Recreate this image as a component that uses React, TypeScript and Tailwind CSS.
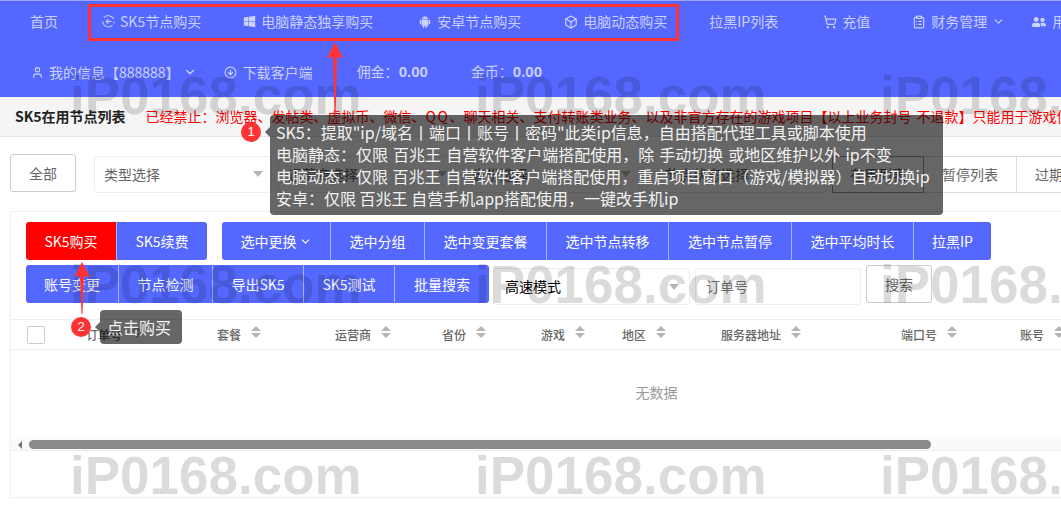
import { ChevronDown, CircleArrowDown, Box, ShoppingCart, User, ClipboardList } from "lucide-react"
import { AiFillAndroid } from "react-icons/ai"
import { FaWindows, FaUserFriends } from "react-icons/fa"

const font = "font-['Noto_Sans_CJK_SC','Liberation_Sans',sans-serif]"

function Sk5Icon() {
  return (
    <svg width="13" height="13" viewBox="0 0 14 14" fill="none" stroke="currentColor" strokeWidth="1.1">
      <path d="M12.5 4.5A6 6 0 0 0 2 3.2M1 7a6 6 0 0 0 10.4 4" />
      <path d="M13 7a6 6 0 0 1-.4 2" />
      <path d="M4.5 7H10M7 4.5 4.5 7 7 9.5" />
    </svg>
  )
}

function SortIcon() {
  return (
    <span className="flex flex-col gap-[2px] ml-[10px] -mt-[5px]">
      <span className="w-0 h-0 border-x-[5px] border-x-transparent border-b-[5px] border-b-[#b5b5b5]" />
      <span className="w-0 h-0 border-x-[5px] border-x-transparent border-t-[5px] border-t-[#b5b5b5]" />
    </span>
  )
}

function Caret() {
  return <span className="w-0 h-0 border-x-[5px] border-x-transparent border-t-[6px] border-t-[#b5b5b5]" />
}

const headers = [
  { label: "订单号", w: "w-[131px]" },
  { label: "套餐", w: "w-[118px]" },
  { label: "运营商", w: "w-[107px]" },
  { label: "省份", w: "w-[99px]" },
  { label: "游戏", w: "w-[81px]" },
  { label: "地区", w: "w-[99px]" },
  { label: "服务器地址", w: "w-[180px]" },
  { label: "端口号", w: "w-[119px]" },
  { label: "账号", w: "w-[60px]" },
]

function Watermark() {
  const rows = ["top-[66px]", "top-[255px]", "top-[446px]"]
  const cols = ["left-[70px]", "left-[475px]", "left-[880px]"]
  return (
    <>
      {rows.map((r) =>
        cols.map((c) => (
          <span
            key={r + c}
            className={`absolute ${r} ${c} font-['Liberation_Sans'] font-bold text-[53px] leading-[60px] text-black/[0.14] whitespace-nowrap pointer-events-none`}
          >
            iP0168.com
          </span>
        ))
      )}
    </>
  )
}

export default function App() {
  const navTop = "flex items-center gap-[5px] shrink-0"
  const select = "shrink-0 h-[37px] border border-[#eee] rounded-[3px] flex items-center justify-between pl-[9px] pr-[8px]"
  return (
    <div className={`relative w-[1061px] h-[513px] overflow-hidden bg-white text-[14px] ${font}`}>
      <header className="h-[97px] bg-[#5468ff] border-t border-[#9aa6ff] text-white/70">
        <div className="h-[41px] flex items-center pl-[30px] gap-[44px] whitespace-nowrap">
          <span>首页</span>
          <span className={navTop}><Sk5Icon />SK5节点购买</span>
          <span className={`${navTop} -ml-[2px]`}><FaWindows size={13} />电脑静态独享购买</span>
          <span className={`${navTop} ml-[1px]`}><AiFillAndroid size={14} />安卓节点购买</span>
          <span className={`${navTop} -ml-[1px]`}><Box size={14} />电脑动态购买</span>
          <span className="-ml-[2px]">拉黑IP列表</span>
          <span className={`${navTop} ml-[1px]`}><ShoppingCart size={14} />充值</span>
          <span className={`${navTop} -ml-[2px]`}><ClipboardList size={14} />财务管理<ChevronDown size={13} /></span>
          <span className={`${navTop} -ml-[17px] gap-[6px]`}><FaUserFriends size={14} />用户管理</span>
        </div>
        <div className="h-[55px] pt-[5px] flex items-center pl-[31px] whitespace-nowrap">
          <span className={navTop}><User size={13} />我的信息【888888】<ChevronDown size={14} className="-ml-[2px]" /></span>
          <span className={`${navTop} ml-[27px] gap-[6px]`}><CircleArrowDown size={13} />下载客户端</span>
          <span className="ml-[44px]">佣金：<b className="font-['Liberation_Sans'] text-[15px] font-bold">0.00</b></span>
          <span className="ml-[43px]">金币：<b className="font-['Liberation_Sans'] text-[15px] font-bold">0.00</b></span>
        </div>
      </header>

      <div className="h-[40px] bg-[#f5f5f5] border-b border-[#e5e5e5] flex items-center pl-[15px] whitespace-nowrap">
        <b className="text-[14px] font-bold text-[#222]">SK5在用节点列表</b>
        <span className="ml-[20px] text-[#f00] [word-spacing:2px]">已经禁止：浏览器、发帖类、虚拟币、微信、<span className="tracking-[1.5px]">QQ</span>、聊天相关、支付转账类业务、以及非官方存在的游戏项目【以上业务封号 不退款】只能用于游戏使用</span>
      </div>

      <div className="h-[74px] flex items-center pl-[10px] text-[#666] whitespace-nowrap">
        <button className="shrink-0 w-[66px] h-[38px] border border-[#ccc] rounded-[3px] -mt-[2px]">全部</button>
        <div className={`${select} ml-[18px] w-[178px]`}>类型选择<Caret /></div>
        <div className={`${select} ml-[6px] w-[178px]`}>运营商选择<Caret /></div>
        <div className={`${select} ml-[6px] w-[178px]`}>省份选择<Caret /></div>
        <div className={`${select} ml-[2px] w-[185px] pl-[22px]`}>节点状态选择</div>
        <div className="ml-[5px] flex h-[37px] shrink-0">
          <span className="w-[92px] border border-[#999] flex items-center justify-center">在用列表</span>
          <span className="w-[93px] border border-l-0 border-[#ddd] flex items-center justify-center">暂停列表</span>
          <span className="w-[93px] border border-l-0 border-[#ddd] flex items-center justify-center">过期列表</span>
        </div>
      </div>

      <section className="ml-[10px] h-[287px] border border-r-0 border-[#eee]">
        <div className="pl-[15px] pt-[10px] flex text-white">
          <div className="flex h-[38px]">
            <span className="w-[90px] bg-[#f00] rounded-l-[3px] flex items-center justify-center">SK5购买</span>
            <span className="w-[91px] bg-[#5468ff] border-l border-white/50 rounded-r-[3px] flex items-center justify-center">SK5续费</span>
          </div>
          <div className="ml-[15px] flex h-[38px] bg-[#5468ff] rounded-[3px] divide-x divide-white/50">
            <span className="w-[109px] flex items-center justify-center gap-[2px]">选中更换<ChevronDown size={13} /></span>
            <span className="w-[94px] flex items-center justify-center">选中分组</span>
            <span className="w-[122px] flex items-center justify-center">选中变更套餐</span>
            <span className="w-[122px] flex items-center justify-center">选中节点转移</span>
            <span className="w-[123px] flex items-center justify-center">选中节点暂停</span>
            <span className="w-[122px] flex items-center justify-center">选中平均时长</span>
            <span className="w-[77px] flex items-center justify-center">拉黑IP</span>
          </div>
        </div>

        <div className="pl-[15px] mt-[5px] flex items-start">
          <div className="flex h-[38px] bg-[#5468ff] rounded-[3px] text-white divide-x divide-white/50">
            <span className="w-[93px] flex items-center justify-center">账号变更</span>
            <span className="w-[94px] flex items-center justify-center">节点检测</span>
            <span className="w-[91px] flex items-center justify-center">导出SK5</span>
            <span className="w-[91px] flex items-center justify-center">SK5测试</span>
            <span className="w-[94px] flex items-center justify-center">批量搜索</span>
          </div>
          <div className="ml-[4px] mt-[3px] w-[197px] h-[37px] border border-[#eee] rounded-[3px] flex items-center justify-between pl-[11px] pr-[10px] text-black">高速模式<Caret /></div>
          <div className="ml-[5px] mt-[3px] w-[166px] h-[37px] border border-[#eee] rounded-[3px] flex items-center pl-[10px] text-[#777]">订单号</div>
          <button className="ml-[5px] w-[66px] h-[38px] border border-[#ccc] rounded-[3px] text-[#666]">搜索</button>
        </div>

        <div className="mt-[14px] h-[31px] border-y border-[#eee] flex items-center pl-[16px] text-[12px] font-medium text-[#666] whitespace-nowrap">
          <span className="w-[18px] h-[18px] border border-[#ccc] rounded-[2px] shrink-0" />
          <div className="ml-[41px] flex items-center">
            {headers.map((h) => (
              <span key={h.label} className={`${h.w} flex items-center shrink-0`}>
                {h.label}
                <SortIcon />
              </span>
            ))}
          </div>
        </div>

        <div className="h-[89px] flex items-center justify-center text-[#999] pl-[241px] pb-[4px]">无数据</div>

        <div className="h-[12px] bg-[#fafafa] border-b border-[#eee] flex items-center pl-[7px]">
          <span className="w-0 h-0 border-y-[4px] border-y-transparent border-r-[4px] border-r-[#777]" />
          <span className="ml-[7px] w-[902px] h-[9px] rounded-full bg-[#8a8a8a]" />
        </div>
      </section>

      <Watermark />

      {/* annotation layer */}
      <div className="absolute left-[88px] top-[4px] w-[591px] h-[37px] border-[3px] border-[#f33]" />

      <svg className="absolute left-0 top-0" width="1061" height="513">
        <path d="M335 42 343 58 337 57 335.5 116 334.5 116 333 57 327 58Z" fill="#f33" />
        <path d="M82 262 90 277 84 276 82.5 314 81.5 314 80 276 74 277Z" fill="#f33" />
      </svg>

      <div className="absolute left-[241px] top-[122px] w-[20px] h-[20px] rounded-full bg-[#f33] text-white flex items-center justify-center text-[13px] font-['Liberation_Sans']">1</div>
      <div className="absolute left-[270px] top-[115px] w-[673px] h-[100px] bg-black/60 rounded-[4px] text-[#f2f2f2] text-[16px] leading-[22px] pl-[6px] pt-[6px] whitespace-nowrap">
        <span className="absolute -left-[5px] top-[12px] w-0 h-0 border-y-[5px] border-y-transparent border-r-[5px] border-r-black/60" />
        <div>SK5：提取"ip/域名丨端口丨账号丨密码"此类ip信息，自由搭配代理工具或脚本使用</div>
        <div className="[word-spacing:1.5px]">电脑静态：仅限 百兆王 自营软件客户端搭配使用，除 手动切换 或地区维护以外 ip不变</div>
        <div className="[word-spacing:1px]">电脑动态：仅限 百兆王 自营软件客户端搭配使用，重启项目窗口（游戏/模拟器）自动切换ip</div>
        <div>安卓：仅限 百兆王 自营手机app搭配使用，一键改手机ip</div>
      </div>

      <div className="absolute left-[71px] top-[317px] w-[20px] h-[20px] rounded-full bg-[#f33] text-white flex items-center justify-center text-[13px] font-['Liberation_Sans']">2</div>
      <div className="absolute left-[100px] top-[310px] w-[82px] h-[34px] bg-black/60 rounded-[4px] text-[#f2f2f2] text-[16px] flex items-center pl-[7px]">
        <span className="absolute -left-[5px] top-[12px] w-0 h-0 border-y-[5px] border-y-transparent border-r-[5px] border-r-black/60" />
        点击购买
      </div>
    </div>
  )
}
